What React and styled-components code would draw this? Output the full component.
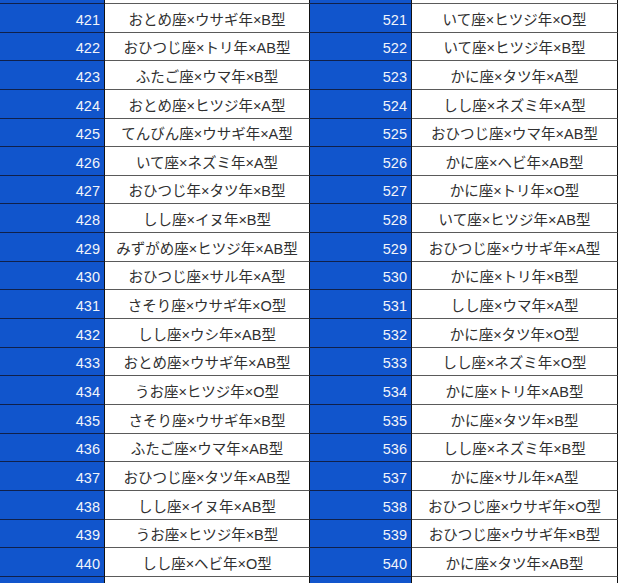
import React from "react";
import styled, { createGlobalStyle } from "styled-components";

const GlobalStyle = createGlobalStyle`
  html, body {
    margin: 0;
    padding: 0;
    background: #ffffff;
  }
  body {
    font-family: "Liberation Sans", "Noto Sans CJK JP", sans-serif;
  }
`;

const left = [
  "おとめ座×ウサギ年×B型",
  "おひつじ座×トリ年×AB型",
  "ふたご座×ウマ年×B型",
  "おとめ座×ヒツジ年×A型",
  "てんびん座×ウサギ年×A型",
  "いて座×ネズミ年×A型",
  "おひつじ年×タツ年×B型",
  "しし座×イヌ年×B型",
  "みずがめ座×ヒツジ年×AB型",
  "おひつじ座×サル年×A型",
  "さそり座×ウサギ年×O型",
  "しし座×ウシ年×AB型",
  "おとめ座×ウサギ年×AB型",
  "うお座×ヒツジ年×O型",
  "さそり座×ウサギ年×B型",
  "ふたご座×ウマ年×AB型",
  "おひつじ座×タツ年×AB型",
  "しし座×イヌ年×AB型",
  "うお座×ヒツジ年×B型",
  "しし座×ヘビ年×O型",
];

const right = [
  "いて座×ヒツジ年×O型",
  "いて座×ヒツジ年×B型",
  "かに座×タツ年×A型",
  "しし座×ネズミ年×A型",
  "おひつじ座×ウマ年×AB型",
  "かに座×ヘビ年×AB型",
  "かに座×トリ年×O型",
  "いて座×ヒツジ年×AB型",
  "おひつじ座×ウサギ年×A型",
  "かに座×トリ年×B型",
  "しし座×ウマ年×A型",
  "かに座×タツ年×O型",
  "しし座×ネズミ年×O型",
  "かに座×トリ年×AB型",
  "かに座×タツ年×B型",
  "しし座×ネズミ年×B型",
  "かに座×サル年×A型",
  "おひつじ座×ウサギ年×O型",
  "おひつじ座×ウサギ年×B型",
  "かに座×タツ年×AB型",
];

const Page = styled.div`
  width: 620px;
  height: 583px;
  overflow: hidden;
  background: #ffffff;
`;

const Sheet = styled.div`
  display: grid;
  grid-template-columns: 105px 205px 102px 206px;
  grid-template-rows: 4px repeat(20, 28.65px) 1fr;
  height: 583px;
  width: 618px;
`;

const Cell = styled.div`
  display: flex;
  align-items: flex-end;
  padding-bottom: 3px;
  box-sizing: border-box;
  border-bottom: 1px solid ${(p) => (p.$blue ? "#10204a" : "#5a5a5a")};
  border-right: 1px solid #111111;
  font-size: 14.5px;
  line-height: 17px;
  white-space: nowrap;
  overflow: hidden;
`;

const NumCell = styled(Cell)`
  background: #1155cc;
  color: #f2f4fa;
  justify-content: flex-end;
  padding-right: 4px;
`;

const NameCell = styled(Cell)`
  background: #ffffff;
  color: #303030;
  justify-content: center;
`;

const EdgeNum = styled(NumCell)`
  padding: 0;
  ${(p) => p.$last && "border-bottom: none;"}
`;

const EdgeName = styled(NameCell)`
  padding: 0;
  ${(p) => p.$last && "border-bottom: none;"}
`;

function EdgeRow({ last }) {
  return (
    <>
      <EdgeNum $blue $last={last} />
      <EdgeName $last={last} />
      <EdgeNum $blue $last={last} />
      <EdgeName $last={last} />
    </>
  );
}

export default function App() {
  return (
    <Page>
      <GlobalStyle />
      <Sheet>
        <EdgeRow />
        {left.map((name, i) => (
          <React.Fragment key={i}>
            <NumCell $blue>{421 + i}</NumCell>
            <NameCell>{name}</NameCell>
            <NumCell $blue>{521 + i}</NumCell>
            <NameCell>{right[i]}</NameCell>
          </React.Fragment>
        ))}
        <EdgeRow last />
      </Sheet>
    </Page>
  );
}
